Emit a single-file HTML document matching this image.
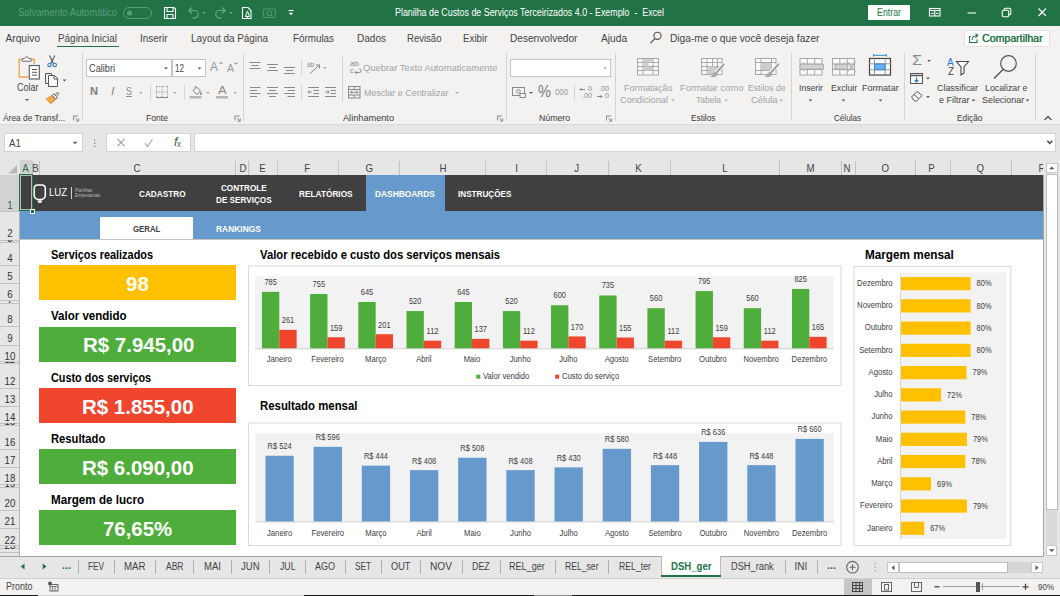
<!DOCTYPE html>
<html lang="pt-BR"><head><meta charset="utf-8"><title>Planilha de Custos de Serviços Terceirizados 4.0 - Exemplo - Excel</title>
<style>
html,body{margin:0;padding:0;}
body{width:1060px;height:596px;position:relative;overflow:hidden;background:#e6e6e6;font-family:"Liberation Sans",sans-serif;}
.t{position:absolute;white-space:nowrap;display:block;}
.r{position:absolute;}
.ov{position:absolute;left:0;top:0;pointer-events:none;}
</style></head><body>
<div class="r" style="left:0px;top:0px;width:1060px;height:26px;background:#217346;"></div>
<div class="r" style="left:0px;top:26px;width:1060px;height:98px;background:#f3f2f1;"></div>
<div class="r" style="left:0px;top:124px;width:1060px;height:1px;background:#dadada;"></div>
<div class="r" style="left:0px;top:125px;width:1060px;height:50px;background:#e6e6e6;"></div>
<span class="t" style="left:18.00px;top:7.40px;font-size:10px;line-height:12.0px;color:#5f9c7c;transform:scaleX(0.9423);transform-origin:left center;">Salvamento Automático</span>
<span class="t" style="left:395.00px;top:6.80px;font-size:10px;line-height:12.0px;color:#fff;transform:scaleX(0.8869);transform-origin:left center;white-space:pre;">Planilha de Custos de Serviços Terceirizados 4.0 - Exemplo  -  Excel</span>
<div class="r" style="left:868px;top:5px;width:41.5px;height:15px;background:#fff;border-radius:1px;"></div>
<span class="t" style="left:877.00px;top:6.50px;font-size:10px;line-height:12.0px;color:#217346;transform:scaleX(0.8813);transform-origin:left center;">Entrar</span>
<span class="t" style="left:5.50px;top:32.98px;font-size:10.2px;line-height:12.24px;color:#444;">Arquivo</span>
<span class="t" style="left:58.00px;top:32.98px;font-size:10.2px;line-height:12.24px;color:#444;transform:scaleX(0.9724);transform-origin:left center;">Página Inicial</span>
<span class="t" style="left:139.50px;top:32.98px;font-size:10.2px;line-height:12.24px;color:#444;transform:scaleX(0.9704);transform-origin:left center;">Inserir</span>
<span class="t" style="left:191.00px;top:32.98px;font-size:10.2px;line-height:12.24px;color:#444;transform:scaleX(0.9698);transform-origin:left center;">Layout da Página</span>
<span class="t" style="left:292.50px;top:32.98px;font-size:10.2px;line-height:12.24px;color:#444;transform:scaleX(0.9645);transform-origin:left center;">Fórmulas</span>
<span class="t" style="left:356.50px;top:32.98px;font-size:10.2px;line-height:12.24px;color:#444;transform:scaleX(0.9835);transform-origin:left center;">Dados</span>
<span class="t" style="left:406.50px;top:32.98px;font-size:10.2px;line-height:12.24px;color:#444;transform:scaleX(0.9362);transform-origin:left center;">Revisão</span>
<span class="t" style="left:463.00px;top:32.98px;font-size:10.2px;line-height:12.24px;color:#444;transform:scaleX(0.9606);transform-origin:left center;">Exibir</span>
<span class="t" style="left:510.00px;top:32.98px;font-size:10.2px;line-height:12.24px;color:#444;transform:scaleX(0.9921);transform-origin:left center;">Desenvolvedor</span>
<span class="t" style="left:601.00px;top:32.98px;font-size:10.2px;line-height:12.24px;color:#444;">Ajuda</span>
<span class="t" style="left:670.00px;top:32.98px;font-size:10.2px;line-height:12.24px;color:#444;">Diga-me o que você deseja fazer</span>
<div class="r" style="left:57px;top:45.5px;width:61.5px;height:1.8px;background:#217346;"></div>
<div class="r" style="left:964px;top:29.5px;width:86px;height:17px;background:#fff;box-sizing:border-box;border:1px solid #e0e0e0;border-radius:2px;"></div>
<span class="t" style="left:982.00px;top:32.78px;font-size:10.2px;line-height:12.24px;color:#217346;transform:scaleX(1.0362);transform-origin:left center;text-shadow:0.3px 0 0 #217346;">Compartilhar</span>
<div class="r" style="left:82px;top:53px;width:1px;height:68px;background:#d4d4d4;"></div>
<div class="r" style="left:242.8px;top:53px;width:1px;height:68px;background:#d4d4d4;"></div>
<div class="r" style="left:505.5px;top:53px;width:1px;height:68px;background:#d4d4d4;"></div>
<div class="r" style="left:615px;top:53px;width:1px;height:68px;background:#d4d4d4;"></div>
<div class="r" style="left:791px;top:53px;width:1px;height:68px;background:#d4d4d4;"></div>
<div class="r" style="left:904px;top:53px;width:1px;height:68px;background:#d4d4d4;"></div>
<div class="r" style="left:1035px;top:53px;width:1px;height:68px;background:#d4d4d4;"></div>
<div class="r" style="left:150px;top:85px;width:1px;height:15px;background:#d4d4d4;"></div>
<div class="r" style="left:183.5px;top:85px;width:1px;height:15px;background:#d4d4d4;"></div>
<div class="r" style="left:301px;top:60px;width:1px;height:15px;background:#d4d4d4;"></div>
<div class="r" style="left:301px;top:85px;width:1px;height:15px;background:#d4d4d4;"></div>
<div class="r" style="left:341.8px;top:57px;width:1px;height:45px;background:#d4d4d4;"></div>
<div class="r" style="left:573.5px;top:85px;width:1px;height:15px;background:#d4d4d4;"></div>
<span class="t" style="left:3.00px;top:112.32px;font-size:9.8px;line-height:11.76px;color:#3a3a3a;transform:scaleX(0.8558);transform-origin:left center;">Área de Transf...</span>
<span class="t" style="left:146.00px;top:112.32px;font-size:9.8px;line-height:11.76px;color:#3a3a3a;transform:scaleX(0.8779);transform-origin:left center;">Fonte</span>
<span class="t" style="left:343.00px;top:112.32px;font-size:9.8px;line-height:11.76px;color:#3a3a3a;transform:scaleX(0.9361);transform-origin:left center;">Alinhamento</span>
<span class="t" style="left:539.00px;top:112.32px;font-size:9.8px;line-height:11.76px;color:#3a3a3a;transform:scaleX(0.8894);transform-origin:left center;">Número</span>
<span class="t" style="left:690.50px;top:112.32px;font-size:9.8px;line-height:11.76px;color:#3a3a3a;transform:scaleX(0.8488);transform-origin:left center;">Estilos</span>
<span class="t" style="left:834.00px;top:112.32px;font-size:9.8px;line-height:11.76px;color:#3a3a3a;transform:scaleX(0.8261);transform-origin:left center;">Células</span>
<span class="t" style="left:957.30px;top:112.32px;font-size:9.8px;line-height:11.76px;color:#3a3a3a;transform:scaleX(0.8510);transform-origin:left center;">Edição</span>
<span class="t" style="left:16.50px;top:81.90px;font-size:10px;line-height:12.0px;color:#444;transform:scaleX(0.8997);transform-origin:left center;">Colar</span>
<div class="r" style="left:86px;top:59px;width:86px;height:17.5px;background:#fff;box-sizing:border-box;border:1px solid #c6c6c6;"></div>
<div class="r" style="left:171.5px;top:59px;width:34px;height:17.5px;background:#fff;box-sizing:border-box;border:1px solid #c6c6c6;"></div>
<span class="t" style="left:89.00px;top:62.70px;font-size:10px;line-height:12.0px;color:#444;transform:scaleX(0.9174);transform-origin:left center;">Calibri</span>
<span class="t" style="left:175.00px;top:62.70px;font-size:10px;line-height:12.0px;color:#444;transform:scaleX(0.8091);transform-origin:left center;">12</span>
<span class="t" style="left:210.00px;top:60.30px;font-size:12px;line-height:14.4px;color:#999;">A</span>
<span class="t" style="left:227.00px;top:61.70px;font-size:10.5px;line-height:12.6px;color:#999;">A</span>
<span class="t" style="left:90.00px;top:85.10px;font-size:11.5px;line-height:13.8px;color:#7c7c7c;font-weight:700;transform:scaleX(0.9633);transform-origin:left center;">N</span>
<span class="t" style="left:110.50px;top:85.10px;font-size:11.5px;line-height:13.8px;color:#8a8a8a;font-style:italic;transform:scaleX(1.0954);transform-origin:left center;font-family:"Liberation Serif",serif;">I</span>
<span class="t" style="left:126.00px;top:85.10px;font-size:11.5px;line-height:13.8px;color:#8a8a8a;transform:scaleX(0.7822);transform-origin:left center;text-decoration:underline;">S</span>
<span class="t" style="left:217.80px;top:84.20px;font-size:11px;line-height:13.2px;color:#8a8a8a;transform:scaleX(1.1858);transform-origin:left center;">A</span>
<span class="t" style="left:363.00px;top:62.24px;font-size:9.6px;line-height:11.52px;color:#a3a3a3;transform:scaleX(0.9782);transform-origin:left center;">Quebrar Texto Automaticamente</span>
<span class="t" style="left:363.50px;top:87.24px;font-size:9.6px;line-height:11.52px;color:#a3a3a3;transform:scaleX(0.9317);transform-origin:left center;">Mesclar e Centralizar</span>
<div class="r" style="left:510px;top:59px;width:101px;height:17.5px;background:#fff;box-sizing:border-box;border:1px solid #c6c6c6;"></div>
<span class="t" style="left:538.00px;top:82.30px;font-size:17px;line-height:20.4px;color:#777;transform:scaleX(0.8600);transform-origin:left center;">%</span>
<span class="t" style="left:555.00px;top:86.60px;font-size:9px;line-height:10.8px;color:#999;transform:scaleX(0.8657);transform-origin:left center;">000</span>
<span class="t" style="left:624.00px;top:82.14px;font-size:9.6px;line-height:11.52px;color:#a3a3a3;transform:scaleX(0.9469);transform-origin:left center;">Formatação</span>
<span class="t" style="left:620.00px;top:94.24px;font-size:9.6px;line-height:11.52px;color:#a3a3a3;transform:scaleX(0.9568);transform-origin:left center;">Condicional</span>
<span class="t" style="left:679.50px;top:82.14px;font-size:9.6px;line-height:11.52px;color:#a3a3a3;transform:scaleX(0.9757);transform-origin:left center;">Formatar como</span>
<span class="t" style="left:696.00px;top:94.24px;font-size:9.6px;line-height:11.52px;color:#a3a3a3;transform:scaleX(0.8837);transform-origin:left center;">Tabela</span>
<span class="t" style="left:747.50px;top:82.14px;font-size:9.6px;line-height:11.52px;color:#a3a3a3;transform:scaleX(0.9010);transform-origin:left center;">Estilos de</span>
<span class="t" style="left:751.00px;top:94.24px;font-size:9.6px;line-height:11.52px;color:#a3a3a3;transform:scaleX(0.9737);transform-origin:left center;">Célula</span>
<span class="t" style="left:798.80px;top:82.24px;font-size:9.6px;line-height:11.52px;color:#444;transform:scaleX(0.8998);transform-origin:left center;">Inserir</span>
<span class="t" style="left:830.80px;top:82.24px;font-size:9.6px;line-height:11.52px;color:#444;transform:scaleX(0.9096);transform-origin:left center;">Excluir</span>
<span class="t" style="left:862.00px;top:82.24px;font-size:9.6px;line-height:11.52px;color:#444;transform:scaleX(0.9425);transform-origin:left center;">Formatar</span>
<span class="t" style="left:937.00px;top:82.24px;font-size:9.6px;line-height:11.52px;color:#444;transform:scaleX(0.9260);transform-origin:left center;">Classificar</span>
<span class="t" style="left:939.00px;top:94.24px;font-size:9.6px;line-height:11.52px;color:#444;transform:scaleX(0.9374);transform-origin:left center;">e Filtrar</span>
<span class="t" style="left:985.00px;top:82.24px;font-size:9.6px;line-height:11.52px;color:#444;transform:scaleX(0.9154);transform-origin:left center;">Localizar e</span>
<span class="t" style="left:981.60px;top:94.24px;font-size:9.6px;line-height:11.52px;color:#444;transform:scaleX(0.9303);transform-origin:left center;">Selecionar</span>
<span class="t" style="left:911.50px;top:52.10px;font-size:14px;line-height:16.8px;color:#8a8a8a;transform:scaleX(1.1555);transform-origin:left center;">Σ</span>
<div class="r" style="left:4px;top:132.8px;width:78.5px;height:19.6px;background:#fff;box-sizing:border-box;border:1px solid #d4d4d4;"></div>
<div class="r" style="left:106px;top:132.8px;width:85px;height:19.6px;background:#fff;box-sizing:border-box;border:1px solid #d4d4d4;"></div>
<div class="r" style="left:194px;top:132.8px;width:861.6px;height:19.6px;background:#fff;box-sizing:border-box;border:1px solid #d4d4d4;"></div>
<span class="t" style="left:9.00px;top:136.70px;font-size:10.5px;line-height:12.6px;color:#444;transform:scaleX(0.9343);transform-origin:left center;">A1</span>
<span class="t" style="left:173.50px;top:135.00px;font-size:12.5px;line-height:15.0px;color:#555;font-style:italic;transform:scaleX(1.0077);transform-origin:left center;font-family:"Liberation Serif",serif;">f</span>
<span class="t" style="left:177.00px;top:139.40px;font-size:8.5px;line-height:10.2px;color:#555;font-style:italic;transform:scaleX(0.9412);transform-origin:left center;font-family:"Liberation Serif",serif;">x</span>
<span class="t" style="left:947.30px;top:56.00px;font-size:10.5px;line-height:12.6px;color:#2b7cd3;transform:scaleX(0.9567);transform-origin:left center;">A</span>
<span class="t" style="left:947.50px;top:65.00px;font-size:10.5px;line-height:12.6px;color:#444;transform:scaleX(0.9355);transform-origin:left center;">Z</span>
<span class="t" style="left:349.50px;top:59.00px;font-size:8px;line-height:9.6px;color:#8a8a8a;transform:scaleX(1.0114);transform-origin:left center;">ab</span>
<span class="t" style="left:349.80px;top:66.20px;font-size:8px;line-height:9.6px;color:#8a8a8a;transform:scaleX(0.8750);transform-origin:left center;">c</span>
<span class="t" style="left:307.00px;top:61.10px;font-size:6.5px;line-height:7.8px;color:#8a8a8a;transform:scaleX(0.9682);transform-origin:left center;">ab</span>
<span class="t" style="left:587.50px;top:85.10px;font-size:7px;line-height:8.4px;color:#8a8a8a;transform:scaleX(1.0274);transform-origin:left center;">0</span>
<span class="t" style="left:582.00px;top:92.10px;font-size:7px;line-height:8.4px;color:#8a8a8a;transform:scaleX(1.0276);transform-origin:left center;">.00</span>
<span class="t" style="left:598.50px;top:85.10px;font-size:7px;line-height:8.4px;color:#8a8a8a;transform:scaleX(1.0276);transform-origin:left center;">.00</span>
<span class="t" style="left:604.50px;top:92.10px;font-size:7px;line-height:8.4px;color:#8a8a8a;transform:scaleX(1.0274);transform-origin:left center;">0</span>
<div class="r" style="left:19.5px;top:174.5px;width:1023.5px;height:381px;background:#fff;"></div>
<div class="r" style="left:19.5px;top:160px;width:12.5px;height:14.5px;background:#d2d2d2;"></div>
<div class="r" style="left:19.5px;top:173.5px;width:12.5px;height:1.5px;background:#217346;"></div>
<div class="r" style="left:31.5px;top:161px;width:1px;height:13.5px;background:#c2c2c2;"></div>
<div class="r" style="left:38.8px;top:161px;width:1px;height:13.5px;background:#c2c2c2;"></div>
<div class="r" style="left:235.25px;top:161px;width:1px;height:13.5px;background:#c2c2c2;"></div>
<div class="r" style="left:248.25px;top:161px;width:1px;height:13.5px;background:#c2c2c2;"></div>
<div class="r" style="left:277.0px;top:161px;width:1px;height:13.5px;background:#c2c2c2;"></div>
<div class="r" style="left:338.25px;top:161px;width:1px;height:13.5px;background:#c2c2c2;"></div>
<div class="r" style="left:399.0px;top:161px;width:1px;height:13.5px;background:#c2c2c2;"></div>
<div class="r" style="left:484.5px;top:161px;width:1px;height:13.5px;background:#c2c2c2;"></div>
<div class="r" style="left:545.5px;top:161px;width:1px;height:13.5px;background:#c2c2c2;"></div>
<div class="r" style="left:608.0px;top:161px;width:1px;height:13.5px;background:#c2c2c2;"></div>
<div class="r" style="left:669.5px;top:161px;width:1px;height:13.5px;background:#c2c2c2;"></div>
<div class="r" style="left:778.5px;top:161px;width:1px;height:13.5px;background:#c2c2c2;"></div>
<div class="r" style="left:840.5px;top:161px;width:1px;height:13.5px;background:#c2c2c2;"></div>
<div class="r" style="left:854.5px;top:161px;width:1px;height:13.5px;background:#c2c2c2;"></div>
<div class="r" style="left:914.5px;top:161px;width:1px;height:13.5px;background:#c2c2c2;"></div>
<div class="r" style="left:949.5px;top:161px;width:1px;height:13.5px;background:#c2c2c2;"></div>
<div class="r" style="left:1010.5px;top:161px;width:1px;height:13.5px;background:#c2c2c2;"></div>
<span class="t" style="left:22.40px;top:161.52px;font-size:10.8px;line-height:12.96px;color:#217346;transform:scaleX(0.9000);transform-origin:center center;">A</span>
<span class="t" style="left:32.00px;top:161.52px;font-size:10.8px;line-height:12.96px;color:#444;transform:scaleX(0.9000);transform-origin:center center;">B</span>
<span class="t" style="left:133.10px;top:161.52px;font-size:10.8px;line-height:12.96px;color:#444;transform:scaleX(0.9000);transform-origin:center center;">C</span>
<span class="t" style="left:238.60px;top:161.52px;font-size:10.8px;line-height:12.96px;color:#444;transform:scaleX(0.9000);transform-origin:center center;">D</span>
<span class="t" style="left:259.40px;top:161.52px;font-size:10.8px;line-height:12.96px;color:#444;transform:scaleX(0.9000);transform-origin:center center;">E</span>
<span class="t" style="left:304.20px;top:161.52px;font-size:10.8px;line-height:12.96px;color:#444;transform:scaleX(0.9000);transform-origin:center center;">F</span>
<span class="t" style="left:365.30px;top:161.52px;font-size:10.8px;line-height:12.96px;color:#444;transform:scaleX(0.9000);transform-origin:center center;">G</span>
<span class="t" style="left:438.60px;top:161.52px;font-size:10.8px;line-height:12.96px;color:#444;transform:scaleX(0.9000);transform-origin:center center;">H</span>
<span class="t" style="left:514.50px;top:161.52px;font-size:10.8px;line-height:12.96px;color:#444;transform:scaleX(0.9000);transform-origin:center center;">I</span>
<span class="t" style="left:574.30px;top:161.52px;font-size:10.8px;line-height:12.96px;color:#444;transform:scaleX(0.9000);transform-origin:center center;">J</span>
<span class="t" style="left:635.40px;top:161.52px;font-size:10.8px;line-height:12.96px;color:#444;transform:scaleX(0.9000);transform-origin:center center;">K</span>
<span class="t" style="left:722.00px;top:161.52px;font-size:10.8px;line-height:12.96px;color:#444;transform:scaleX(0.9000);transform-origin:center center;">L</span>
<span class="t" style="left:805.50px;top:161.52px;font-size:10.8px;line-height:12.96px;color:#444;transform:scaleX(0.9000);transform-origin:center center;">M</span>
<span class="t" style="left:843.10px;top:161.52px;font-size:10.8px;line-height:12.96px;color:#444;transform:scaleX(0.9000);transform-origin:center center;">N</span>
<span class="t" style="left:880.80px;top:161.52px;font-size:10.8px;line-height:12.96px;color:#444;transform:scaleX(0.9000);transform-origin:center center;">O</span>
<span class="t" style="left:928.40px;top:161.52px;font-size:10.8px;line-height:12.96px;color:#444;transform:scaleX(0.9000);transform-origin:center center;">P</span>
<span class="t" style="left:975.80px;top:161.52px;font-size:10.8px;line-height:12.96px;color:#444;transform:scaleX(0.9000);transform-origin:center center;">Q</span>
<span class="t" style="left:1037.90px;top:161.52px;font-size:10.8px;line-height:12.96px;color:#444;transform:scaleX(0.9000);transform-origin:center center;">R</span>
<svg class="ov" width="20" height="16" style="left:0;top:160px" viewBox="0 0 20 16"><path d="M17 5v8.500h-8.500z" fill="#b7b7b7"/></svg>
<div class="r" style="left:0px;top:175px;width:19.5px;height:381px;background:#e6e6e6;"></div>
<div class="r" style="left:0px;top:175px;width:19.5px;height:36px;background:#d2d2d2;"></div>
<div class="r" style="left:18.5px;top:175px;width:1.5px;height:36px;background:#217346;"></div>
<span class="t" style="left:7.00px;top:198.72px;font-size:10.8px;line-height:12.96px;color:#217346;transform:scaleX(0.9000);transform-origin:center center;">1</span>
<span class="t" style="left:7.00px;top:226.72px;font-size:10.8px;line-height:12.96px;color:#333;transform:scaleX(0.9000);transform-origin:center center;">2</span>
<span class="t" style="left:7.00px;top:251.92px;font-size:10.8px;line-height:12.96px;color:#333;transform:scaleX(0.9000);transform-origin:center center;">4</span>
<span class="t" style="left:7.00px;top:270.22px;font-size:10.8px;line-height:12.96px;color:#333;transform:scaleX(0.9000);transform-origin:center center;">5</span>
<span class="t" style="left:7.00px;top:287.92px;font-size:10.8px;line-height:12.96px;color:#333;transform:scaleX(0.9000);transform-origin:center center;">6</span>
<span class="t" style="left:7.00px;top:312.92px;font-size:10.8px;line-height:12.96px;color:#333;transform:scaleX(0.9000);transform-origin:center center;">8</span>
<span class="t" style="left:7.00px;top:331.72px;font-size:10.8px;line-height:12.96px;color:#333;transform:scaleX(0.9000);transform-origin:center center;">9</span>
<span class="t" style="left:3.99px;top:349.72px;font-size:10.8px;line-height:12.96px;color:#333;transform:scaleX(0.9000);transform-origin:center center;">10</span>
<span class="t" style="left:3.99px;top:374.62px;font-size:10.8px;line-height:12.96px;color:#333;transform:scaleX(0.9000);transform-origin:center center;">12</span>
<span class="t" style="left:3.99px;top:392.92px;font-size:10.8px;line-height:12.96px;color:#333;transform:scaleX(0.9000);transform-origin:center center;">13</span>
<span class="t" style="left:3.99px;top:410.72px;font-size:10.8px;line-height:12.96px;color:#333;transform:scaleX(0.9000);transform-origin:center center;">14</span>
<span class="t" style="left:3.99px;top:435.72px;font-size:10.8px;line-height:12.96px;color:#333;transform:scaleX(0.9000);transform-origin:center center;">16</span>
<span class="t" style="left:3.99px;top:454.22px;font-size:10.8px;line-height:12.96px;color:#333;transform:scaleX(0.9000);transform-origin:center center;">17</span>
<span class="t" style="left:3.99px;top:472.22px;font-size:10.8px;line-height:12.96px;color:#333;transform:scaleX(0.9000);transform-origin:center center;">18</span>
<span class="t" style="left:3.99px;top:497.22px;font-size:10.8px;line-height:12.96px;color:#333;transform:scaleX(0.9000);transform-origin:center center;">20</span>
<span class="t" style="left:3.99px;top:515.42px;font-size:10.8px;line-height:12.96px;color:#333;transform:scaleX(0.9000);transform-origin:center center;">21</span>
<span class="t" style="left:3.99px;top:533.72px;font-size:10.8px;line-height:12.96px;color:#333;transform:scaleX(0.9000);transform-origin:center center;">22</span>
<div class="r" style="left:0px;top:210.5px;width:19px;height:1px;background:#c2c2c2;"></div>
<div class="r" style="left:0px;top:239.5px;width:19px;height:1px;background:#c2c2c2;"></div>
<div class="r" style="left:0px;top:241.5px;width:19px;height:1px;background:#c2c2c2;"></div>
<div class="r" style="left:0px;top:265.0px;width:19px;height:1px;background:#c2c2c2;"></div>
<div class="r" style="left:0px;top:283.0px;width:19px;height:1px;background:#c2c2c2;"></div>
<div class="r" style="left:0px;top:300.2px;width:19px;height:1px;background:#c2c2c2;"></div>
<div class="r" style="left:0px;top:302.5px;width:19px;height:1px;background:#c2c2c2;"></div>
<div class="r" style="left:0px;top:325.9px;width:19px;height:1px;background:#c2c2c2;"></div>
<div class="r" style="left:0px;top:344.5px;width:19px;height:1px;background:#c2c2c2;"></div>
<div class="r" style="left:0px;top:361.1px;width:19px;height:1px;background:#c2c2c2;"></div>
<div class="r" style="left:0px;top:363.3px;width:19px;height:1px;background:#c2c2c2;"></div>
<div class="r" style="left:0px;top:387.5px;width:19px;height:1px;background:#c2c2c2;"></div>
<div class="r" style="left:0px;top:405.5px;width:19px;height:1px;background:#c2c2c2;"></div>
<div class="r" style="left:0px;top:422.5px;width:19px;height:1px;background:#c2c2c2;"></div>
<div class="r" style="left:0px;top:425.0px;width:19px;height:1px;background:#c2c2c2;"></div>
<div class="r" style="left:0px;top:448.9px;width:19px;height:1px;background:#c2c2c2;"></div>
<div class="r" style="left:0px;top:467.0px;width:19px;height:1px;background:#c2c2c2;"></div>
<div class="r" style="left:0px;top:483.5px;width:19px;height:1px;background:#c2c2c2;"></div>
<div class="r" style="left:0px;top:486.5px;width:19px;height:1px;background:#c2c2c2;"></div>
<div class="r" style="left:0px;top:510.1px;width:19px;height:1px;background:#c2c2c2;"></div>
<div class="r" style="left:0px;top:528.0px;width:19px;height:1px;background:#c2c2c2;"></div>
<div class="r" style="left:0px;top:545.0px;width:19px;height:1px;background:#c2c2c2;"></div>
<div class="r" style="left:0px;top:547.5px;width:19px;height:1px;background:#c2c2c2;"></div>
<div class="r" style="left:0;top:240px;width:19px;height:2px;overflow:hidden"><span class="t" style="left:7.00px;top:-8.38px;font-size:10.8px;line-height:12.96px;color:#333;transform:scaleX(0.9000);transform-origin:center center;">3</span></div>
<div class="r" style="left:0;top:300.7px;width:19px;height:2.3000000000000114px;overflow:hidden"><span class="t" style="left:7.00px;top:-8.08px;font-size:10.8px;line-height:12.96px;color:#333;transform:scaleX(0.9000);transform-origin:center center;">7</span></div>
<div class="r" style="left:0;top:361.6px;width:19px;height:2.1999999999999886px;overflow:hidden"><span class="t" style="left:4.39px;top:-8.18px;font-size:10.8px;line-height:12.96px;color:#333;transform:scaleX(0.9000);transform-origin:center center;">11</span></div>
<div class="r" style="left:0;top:423px;width:19px;height:2.5px;overflow:hidden"><span class="t" style="left:3.99px;top:-7.88px;font-size:10.8px;line-height:12.96px;color:#333;transform:scaleX(0.9000);transform-origin:center center;">15</span></div>
<div class="r" style="left:0;top:484px;width:19px;height:3px;overflow:hidden"><span class="t" style="left:3.99px;top:-7.38px;font-size:10.8px;line-height:12.96px;color:#333;transform:scaleX(0.9000);transform-origin:center center;">19</span></div>
<div class="r" style="left:0;top:545.5px;width:19px;height:3.5px;overflow:hidden"><span class="t" style="left:3.99px;top:-6.88px;font-size:10.8px;line-height:12.96px;color:#333;transform:scaleX(0.9000);transform-origin:center center;">23</span></div>
<div class="r" style="left:0px;top:552.4px;width:19px;height:1px;background:#c2c2c2;"></div>
<div class="r" style="left:19px;top:175px;width:1px;height:381px;background:#b5b5b5;"></div>
<div class="r" style="left:19.5px;top:174.7px;width:1023.8px;height:36.3px;background:#404040;"></div>
<div class="r" style="left:19.5px;top:210.75px;width:1023.8px;height:28.35px;background:#6699cc;"></div>
<div class="r" style="left:19.5px;top:239.1px;width:1023.8px;height:0.8px;background:#c4c4c4;"></div>
<div class="r" style="left:365.75px;top:174.5px;width:78.75px;height:37px;background:#6699cc;"></div>
<div class="r" style="left:100px;top:217.3px;width:92.6px;height:21.8px;background:#fff;"></div>
<span class="t" style="left:138.60px;top:187.96px;font-size:9.4px;line-height:11.28px;color:#fff;font-weight:700;transform:scaleX(0.8767);transform-origin:left center;">CADASTRO</span>
<span class="t" style="left:221.25px;top:181.86px;font-size:9.4px;line-height:11.28px;color:#fff;font-weight:700;transform:scaleX(0.8674);transform-origin:left center;">CONTROLE</span>
<span class="t" style="left:216.25px;top:194.36px;font-size:9.4px;line-height:11.28px;color:#fff;font-weight:700;transform:scaleX(0.8700);transform-origin:left center;">DE SERVIÇOS</span>
<span class="t" style="left:299.25px;top:187.96px;font-size:9.4px;line-height:11.28px;color:#fff;font-weight:700;transform:scaleX(0.8822);transform-origin:left center;">RELATÓRIOS</span>
<span class="t" style="left:375.00px;top:187.96px;font-size:9.4px;line-height:11.28px;color:#fff;font-weight:700;transform:scaleX(0.8906);transform-origin:left center;">DASHBOARDS</span>
<span class="t" style="left:457.50px;top:187.96px;font-size:9.4px;line-height:11.28px;color:#fff;font-weight:700;transform:scaleX(0.8681);transform-origin:left center;">INSTRUÇÕES</span>
<span class="t" style="left:132.70px;top:223.36px;font-size:9.4px;line-height:11.28px;color:#404040;font-weight:700;transform:scaleX(0.8328);transform-origin:left center;">GERAL</span>
<span class="t" style="left:216.25px;top:222.86px;font-size:9.4px;line-height:11.28px;color:#fff;font-weight:700;transform:scaleX(0.8976);transform-origin:left center;">RANKINGS</span>
<svg class="ov" width="20" height="24" style="left:30px;top:182px" viewBox="0 0 20 24"><path d="M7.500 2.900h4.500a3.300 3.300 0 0 1 3.300 3.300v7a4.200 4.200 0 0 1-4.200 4.200h-2.700a4.200 4.200 0 0 1-4.200-4.200v-7a3.300 3.300 0 0 1 3.300-3.300z" fill="none" stroke="#fff" stroke-width="1.500"/><path d="M7.300 18.200h5l-1 2.800h-3z" fill="#e8e8e8"/></svg>
<span class="t" style="left:49.30px;top:186.18px;font-size:11.2px;line-height:13.44px;color:#fff;transform:scaleX(0.8601);transform-origin:left center;">LUZ</span>
<div class="r" style="left:71px;top:187px;width:0.8px;height:11.5px;background:#cfcfcf;"></div>
<span class="t" style="left:74.80px;top:187.84px;font-size:4.6px;line-height:5.52px;color:#b8b8b8;transform:scaleX(0.9321);transform-origin:left center;">Planilhas</span>
<span class="t" style="left:74.80px;top:192.74px;font-size:4.6px;line-height:5.52px;color:#b8b8b8;transform:scaleX(0.9388);transform-origin:left center;">Empresariais</span>
<div class="r" style="left:19px;top:174.3px;width:13.6px;height:37.2px;background:transparent;box-sizing:border-box;border:1.600px solid #217346;box-shadow:inset 0 0 0 0.800px rgba(255,255,255,.8);"></div>
<div class="r" style="left:29.8px;top:209.3px;width:3.2px;height:3.2px;background:#217346;border:0.600px solid #fff;"></div>
<span class="t" style="left:51.00px;top:247.86px;font-size:11.9px;line-height:14.28px;color:#000;font-weight:700;transform:scaleX(0.9196);transform-origin:left center;">Serviços realizados</span>
<div class="r" style="left:39.1px;top:265px;width:196.5px;height:35.2px;background:#ffc000;"></div>
<span class="t" style="left:126.00px;top:271.64px;font-size:20.6px;line-height:24.72px;color:#fff;font-weight:700;transform:scaleX(0.9950);transform-origin:left center;">98</span>
<span class="t" style="left:50.80px;top:309.16px;font-size:11.9px;line-height:14.28px;color:#000;font-weight:700;transform:scaleX(0.9701);transform-origin:left center;">Valor vendido</span>
<div class="r" style="left:39.1px;top:326.5px;width:196.5px;height:35px;background:#4ead3b;"></div>
<span class="t" style="left:82.50px;top:333.04px;font-size:20.6px;line-height:24.72px;color:#fff;font-weight:700;transform:scaleX(0.9933);transform-origin:left center;">R$ 7.945,00</span>
<span class="t" style="left:51.00px;top:370.66px;font-size:11.9px;line-height:14.28px;color:#000;font-weight:700;transform:scaleX(0.9127);transform-origin:left center;">Custo dos serviços</span>
<div class="r" style="left:39.1px;top:388.4px;width:196.5px;height:34.6px;background:#f0462e;"></div>
<span class="t" style="left:81.90px;top:394.74px;font-size:20.6px;line-height:24.72px;color:#fff;font-weight:700;transform:scaleX(0.9942);transform-origin:left center;">R$ 1.855,00</span>
<span class="t" style="left:51.10px;top:431.86px;font-size:11.9px;line-height:14.28px;color:#000;font-weight:700;transform:scaleX(0.9439);transform-origin:left center;">Resultado</span>
<div class="r" style="left:39.1px;top:449.1px;width:196.5px;height:34.9px;background:#4ead3b;"></div>
<span class="t" style="left:81.90px;top:455.59px;font-size:20.6px;line-height:24.72px;color:#fff;font-weight:700;transform:scaleX(0.9942);transform-origin:left center;">R$ 6.090,00</span>
<span class="t" style="left:51.10px;top:493.46px;font-size:11.9px;line-height:14.28px;color:#000;font-weight:700;transform:scaleX(0.9798);transform-origin:left center;">Margem de lucro</span>
<div class="r" style="left:39.1px;top:510.1px;width:196.5px;height:35.4px;background:#4ead3b;"></div>
<span class="t" style="left:102.60px;top:516.84px;font-size:20.6px;line-height:24.72px;color:#fff;font-weight:700;transform:scaleX(0.9890);transform-origin:left center;">76,65%</span>
<span class="t" style="left:260.00px;top:247.66px;font-size:11.9px;line-height:14.28px;color:#000;font-weight:700;transform:scaleX(0.9461);transform-origin:left center;">Valor recebido e custo dos serviços mensais</span>
<span class="t" style="left:260.00px;top:398.86px;font-size:11.9px;line-height:14.28px;color:#000;font-weight:700;transform:scaleX(0.9573);transform-origin:left center;">Resultado mensal</span>
<span class="t" style="left:865.40px;top:248.06px;font-size:11.9px;line-height:14.28px;color:#000;font-weight:700;transform:scaleX(0.9872);transform-origin:left center;">Margem mensal</span>
<div class="r" style="left:1043px;top:160px;width:17px;height:396.5px;background:#e6e6e6;"></div>
<div class="r" style="left:1043px;top:175px;width:1px;height:381.5px;background:#a6a6a6;"></div>
<div class="r" style="left:1046px;top:174px;width:11.4px;height:371px;background:#dadada;"></div>
<div class="r" style="left:1046.2px;top:162.7px;width:11.4px;height:10.7px;background:#fff;box-sizing:border-box;border:1px solid #c8c8c8;"></div>
<div class="r" style="left:1046.2px;top:174.3px;width:11.4px;height:336.1px;background:#fff;box-sizing:border-box;border:1px solid #bdbdbd;"></div>
<div class="r" style="left:1046px;top:545.1px;width:11.4px;height:11px;background:#fff;box-sizing:border-box;border:1px solid #c8c8c8;"></div>
<div class="r" style="left:0px;top:556.25px;width:1060px;height:22px;background:#e6e6e6;"></div>
<div class="r" style="left:0px;top:555.6px;width:1044px;height:1px;background:#a6a6a6;"></div>
<div class="r" style="left:0px;top:578.25px;width:1060px;height:17.75px;background:#f3f2f1;"></div>
<div class="r" style="left:0px;top:577.75px;width:1060px;height:1px;background:#d0d0d0;"></div>
<div class="r" style="left:77.5px;top:560px;width:1px;height:14px;background:#b0b0b0;"></div>
<div class="r" style="left:114.0px;top:560px;width:1px;height:14px;background:#b0b0b0;"></div>
<div class="r" style="left:155.0px;top:560px;width:1px;height:14px;background:#b0b0b0;"></div>
<div class="r" style="left:193.0px;top:560px;width:1px;height:14px;background:#b0b0b0;"></div>
<div class="r" style="left:231.0px;top:560px;width:1px;height:14px;background:#b0b0b0;"></div>
<div class="r" style="left:269.0px;top:560px;width:1px;height:14px;background:#b0b0b0;"></div>
<div class="r" style="left:305.0px;top:560px;width:1px;height:14px;background:#b0b0b0;"></div>
<div class="r" style="left:345.25px;top:560px;width:1px;height:14px;background:#b0b0b0;"></div>
<div class="r" style="left:381.0px;top:560px;width:1px;height:14px;background:#b0b0b0;"></div>
<div class="r" style="left:420.25px;top:560px;width:1px;height:14px;background:#b0b0b0;"></div>
<div class="r" style="left:461.5px;top:560px;width:1px;height:14px;background:#b0b0b0;"></div>
<div class="r" style="left:500.0px;top:560px;width:1px;height:14px;background:#b0b0b0;"></div>
<div class="r" style="left:555.0px;top:560px;width:1px;height:14px;background:#b0b0b0;"></div>
<div class="r" style="left:608.25px;top:560px;width:1px;height:14px;background:#b0b0b0;"></div>
<div class="r" style="left:784.5px;top:560px;width:1px;height:14px;background:#b0b0b0;"></div>
<div class="r" style="left:817.3px;top:560px;width:1px;height:14px;background:#b0b0b0;"></div>
<span class="t" style="left:87.50px;top:561.20px;font-size:10px;line-height:12.0px;color:#444;transform:scaleX(0.8227);transform-origin:left center;">FEV</span>
<span class="t" style="left:123.50px;top:561.20px;font-size:10px;line-height:12.0px;color:#444;transform:scaleX(0.9675);transform-origin:left center;">MAR</span>
<span class="t" style="left:165.50px;top:561.20px;font-size:10px;line-height:12.0px;color:#444;transform:scaleX(0.8511);transform-origin:left center;">ABR</span>
<span class="t" style="left:204.00px;top:561.20px;font-size:10px;line-height:12.0px;color:#444;transform:scaleX(0.9562);transform-origin:left center;">MAI</span>
<span class="t" style="left:240.50px;top:561.20px;font-size:10px;line-height:12.0px;color:#444;transform:scaleX(0.9515);transform-origin:left center;">JUN</span>
<span class="t" style="left:279.50px;top:561.20px;font-size:10px;line-height:12.0px;color:#444;transform:scaleX(0.8716);transform-origin:left center;">JUL</span>
<span class="t" style="left:314.50px;top:561.20px;font-size:10px;line-height:12.0px;color:#444;transform:scaleX(0.8998);transform-origin:left center;">AGO</span>
<span class="t" style="left:354.50px;top:561.20px;font-size:10px;line-height:12.0px;color:#444;transform:scaleX(0.8227);transform-origin:left center;">SET</span>
<span class="t" style="left:390.50px;top:561.20px;font-size:10px;line-height:12.0px;color:#444;transform:scaleX(0.9238);transform-origin:left center;">OUT</span>
<span class="t" style="left:430.00px;top:561.20px;font-size:10px;line-height:12.0px;color:#444;transform:scaleX(1.0152);transform-origin:left center;">NOV</span>
<span class="t" style="left:471.75px;top:561.20px;font-size:10px;line-height:12.0px;color:#444;transform:scaleX(0.8875);transform-origin:left center;">DEZ</span>
<span class="t" style="left:509.25px;top:561.20px;font-size:10px;line-height:12.0px;color:#444;transform:scaleX(0.9058);transform-origin:left center;">REL_ger</span>
<span class="t" style="left:564.50px;top:561.20px;font-size:10px;line-height:12.0px;color:#444;transform:scaleX(0.8610);transform-origin:left center;">REL_ser</span>
<span class="t" style="left:618.75px;top:561.20px;font-size:10px;line-height:12.0px;color:#444;transform:scaleX(0.8723);transform-origin:left center;">REL_ter</span>
<span class="t" style="left:731.20px;top:561.20px;font-size:10px;line-height:12.0px;color:#444;transform:scaleX(0.9257);transform-origin:left center;">DSH_rank</span>
<span class="t" style="left:794.40px;top:561.20px;font-size:10px;line-height:12.0px;color:#444;">INI</span>
<div class="r" style="left:661.25px;top:555.5px;width:59.5px;height:20px;background:#fff;box-sizing:border-box;border-left:1px solid #bbb;border-right:1px solid #bbb;"></div>
<div class="r" style="left:661.25px;top:574.8px;width:59.5px;height:1.8px;background:#217346;"></div>
<span class="t" style="left:670.75px;top:561.20px;font-size:10px;line-height:12.0px;color:#217346;font-weight:700;transform:scaleX(0.9589);transform-origin:left center;">DSH_ger</span>
<span class="t" style="left:62.00px;top:559.10px;font-size:11.5px;line-height:13.8px;color:#217346;font-weight:700;transform:scaleX(0.9389);transform-origin:left center;">...</span>
<span class="t" style="left:827.40px;top:559.10px;font-size:11.5px;line-height:13.8px;color:#217346;font-weight:700;transform:scaleX(0.9389);transform-origin:left center;">...</span>
<div class="r" style="left:887.3px;top:562.2px;width:11.3px;height:11.1px;background:#fff;box-sizing:border-box;border:1px solid #c8c8c8;"></div>
<div class="r" style="left:898.6px;top:562.2px;width:109.4px;height:11.1px;background:#fff;box-sizing:border-box;border:1px solid #bdbdbd;"></div>
<div class="r" style="left:1008px;top:562.2px;width:23.3px;height:11.1px;background:#d6d6d6;"></div>
<div class="r" style="left:1031.3px;top:562.2px;width:11.3px;height:11.1px;background:#fff;box-sizing:border-box;border:1px solid #c8c8c8;"></div>
<span class="t" style="left:5.50px;top:580.80px;font-size:10px;line-height:12.0px;color:#444;transform:scaleX(0.8994);transform-origin:left center;">Pronto</span>
<div class="r" style="left:843.5px;top:578.5px;width:28px;height:17.5px;background:#c6c6c6;"></div>
<div class="r" style="left:943px;top:586.3px;width:77px;height:1px;background:#a0a0a0;"></div>
<div class="r" style="left:976px;top:581.5px;width:3.5px;height:10.5px;background:#555;"></div>
<div class="r" style="left:981.5px;top:583px;width:1px;height:7px;background:#a0a0a0;"></div>
<span class="t" style="left:1037.50px;top:581.10px;font-size:9.5px;line-height:11.4px;color:#444;transform:scaleX(0.8415);transform-origin:left center;">90%</span>
<div class="r" style="left:0px;top:594.5px;width:37.5px;height:1.5px;background:#1a1a1a;"></div>
<div class="r" style="left:303.75px;top:594.5px;width:756.25px;height:1.5px;background:#1a1a1a;"></div>
<div class="r" style="left:37.5px;top:594.8px;width:266.25px;height:1.2px;background:#d4d4d4;"></div>
<div class="r" style="left:534px;top:594.5px;width:37.7px;height:1.5px;background:#8a8a8a;"></div>
<svg class="ov" width="1060" height="596" viewBox="0 0 1060 596"><path d="M24.500 563.500v6l-3.800-3z" fill="#217346"/><path d="M42.700 563.500v6l3.800-3z" fill="#217346"/><circle cx="852.500" cy="567.200" r="5.800" fill="none" stroke="#666" stroke-width="1.100"/><path d="M849.500 567.200h6M852.500 564.200v6" stroke="#666" stroke-width="1.100"/><path d="M875.200 563v1.300M875.200 566.500v1.300M875.200 570v1.300" stroke="#999" stroke-width="1.200"/><path d="M894.500 565.200v5l-3-2.500z" fill="#555"/><path d="M1035.500 565.200v5l3-2.500z" fill="#555"/><path d="M1049 169.200l2.700-2.800 2.700 2.800z" fill="#555"/><path d="M1049 549.300l2.700 2.800 2.700-2.800z" fill="#555"/><rect x="852.500" y="582.500" width="10" height="9" fill="none" stroke="#444" stroke-width="1"/><path d="M852.500 585.500h10M852.500 588.500h10M856 582.500v9M859.500 582.500v9" stroke="#444" stroke-width="1"/><rect x="881.500" y="582.500" width="10" height="9" fill="none" stroke="#666" stroke-width="1"/><rect x="884.500" y="584.500" width="4" height="5.500" fill="none" stroke="#666" stroke-width="1"/><rect x="911.500" y="582.500" width="10" height="9" fill="none" stroke="#666" stroke-width="1"/><path d="M914.500 582.500v5h4v-5" fill="none" stroke="#666" stroke-width="1"/><path d="M934.500 586.800h5" stroke="#444" stroke-width="1.300"/><path d="M1022.500 586.800h6M1025.500 583.800v6" stroke="#444" stroke-width="1.300"/><rect x="50" y="584.500" width="8" height="6.500" fill="none" stroke="#666" stroke-width="1"/><path d="M52.500 586v5M55 586v5M50 586.500h8" stroke="#666" stroke-width=".8"/><circle cx="50" cy="583.500" r="2" fill="#555"/></svg>
<svg class="ov" width="1060" height="596" viewBox="0 0 1060 596"><rect x="123.5" y="7.5" width="28" height="11" rx="5.5" fill="none" stroke="#5a9a79" stroke-width="1"/><circle cx="129.5" cy="13" r="2.6" fill="#5a9a79"/>
<path d="M164.5 7.5h9.5l1.5 1.5v9.5h-11z" fill="none" stroke="#fff" stroke-width="1.1"/><path d="M167 7.5v4h6v-4M167 18.5v-4h6v4" fill="none" stroke="#fff" stroke-width="1.1"/>
<path d="M189 10.5h5.5a3.7 3.7 0 0 1 0 7.4h-2" fill="none" stroke="#6aa886" stroke-width="1.2"/><path d="M192 7.5l-3.2 3 3.2 3" fill="none" stroke="#6aa886" stroke-width="1.2"/>
<path d="M202.2 12.1h3.6l-1.8 1.8z" fill="#6aa886"/>
<path d="M225 10.5h-5.5a3.7 3.7 0 0 0 0 7.4h2" fill="none" stroke="#6aa886" stroke-width="1.2"/><path d="M222 7.5l3.2 3-3.2 3" fill="none" stroke="#6aa886" stroke-width="1.2"/>
<path d="M229.2 12.1h3.6l-1.8 1.8z" fill="#6aa886"/>
<path d="M242.5 7.5h5.5l3 3v8h-8.5z" fill="none" stroke="#fff" stroke-width="1.1"/><path d="M247.5 11l2 5.5h-4zM247.500 16.500v2.500" fill="none" stroke="#fff" stroke-width="1"/>
<rect x="263.5" y="9" width="12" height="8.500" rx="1" fill="none" stroke="#4f9470" stroke-width="1.1"/><circle cx="269.500" cy="13.300" r="2.300" fill="none" stroke="#4f9470" stroke-width="1.1"/>
<path d="M288.500 10.500h5" stroke="#fff" stroke-width="1.1"/><path d="M288.7 12.85h4.6l-2.3 2.3z" fill="#fff"/>
<rect x="929.5" y="8.5" width="10.500" height="7.500" fill="none" stroke="#fff" stroke-width="1.1"/><path d="M929.500 10.500h10.500M934.750 10.500v5.500" stroke="#fff" stroke-width="1.1"/><path d="M931.300 13.300h2.200M936.200 13.300h2.200" stroke="#fff" stroke-width="1.2"/>
<path d="M967.500 13h8.500" stroke="#fff" stroke-width="1.1"/>
<rect x="1002.3" y="10.300" width="6.400" height="6.400" rx="1.1" fill="none" stroke="#fff" stroke-width="1.1"/><path d="M1004.200 10.300v-.8a1.300 1.300 0 0 1 1.300-1.300h4a1.300 1.300 0 0 1 1.300 1.300v4a1.300 1.300 0 0 1-1.300 1.300h-.8" fill="none" stroke="#fff" stroke-width="1.1"/>
<path d="M1038.500 8.500l7.500 7.500M1046 8.500l-7.500 7.500" stroke="#fff" stroke-width="1.1"/>
<circle cx="657.5" cy="35.8" r="3.6" fill="none" stroke="#555" stroke-width="1.1"/><path d="M655 38.500l-4.500 4.700" stroke="#555" stroke-width="1.2"/>
<path d="M970.500 36.500h-1v6h7.500v-3" fill="none" stroke="#217346" stroke-width="1.1"/><path d="M972 40c.5-3 2.500-4.500 5.500-4.500M975.500 33.300l2.300 2.200-2.300 2.200" fill="none" stroke="#217346" stroke-width="1.1"/>
<path d="M22 59.500h-2.800v17.500h9" fill="none" stroke="#f0a04b" stroke-width="1.300"/><path d="M31.500 59.500h2.800v4.500" fill="none" stroke="#f0a04b" stroke-width="1.300"/><path d="M22.300 61.300v-2.800h2.200a2.300 2.300 0 0 1 4.400 0h2.200v2.800z" fill="#f3f3f3" stroke="#777" stroke-width="1"/>
<rect x="29.300" y="65.500" width="10" height="13.500" fill="#fff" stroke="#555" stroke-width="1.100"/><path d="M32 69.500h5M32 72.300h5M32 75.100h5" stroke="#555" stroke-width="1"/>
<path d="M25 99.0h4l-2 2z" fill="#555"/>
<path d="M49.500 55.500l4.300 8.800M54.800 55.500l-4.300 8.800" stroke="#555" stroke-width="1.1"/><circle cx="49.500" cy="65" r="1.700" fill="none" stroke="#2b7cd3" stroke-width="1.1"/><circle cx="54.800" cy="65" r="1.700" fill="none" stroke="#2b7cd3" stroke-width="1.1"/>
<path d="M48.500 83.500h-3v-10h6v2" fill="none" stroke="#555" stroke-width="1"/><path d="M48.500 75.500h6l3 3v8h-9z" fill="#fff" stroke="#555" stroke-width="1"/><path d="M54 75.500v3.500h3.500" fill="none" stroke="#555" stroke-width="1"/>
<path d="M62.6 79.55h3.8l-1.9 1.9z" fill="#555"/>
<path d="M46.200 98.800l5.800-3.300 3.300 4-4.500 4.300z" fill="#f6a851" stroke="#ea8a2c" stroke-width=".9"/><path d="M52.300 95.300l1.800-1.500 3.300 3.800-1.800 1.700z" fill="#fff" stroke="#555" stroke-width="1"/><path d="M55.500 94.500l2-2.200 1.300 1.200-1.800 2.300" fill="#fff" stroke="#555" stroke-width="1"/>
<path d="M73.5 120.500v-4.500h4.500" fill="none" stroke="#8a8a8a" stroke-width="1"/><path d="M75.5 118l3 3M78.7 118.500v2.700h-2.700" fill="none" stroke="#8a8a8a" stroke-width="1"/>
<path d="M235 120.500v-4.500h4.500" fill="none" stroke="#8a8a8a" stroke-width="1"/><path d="M237 118l3 3M240.2 118.500v2.700h-2.700" fill="none" stroke="#8a8a8a" stroke-width="1"/>
<path d="M497.5 120.500v-4.500h4.500" fill="none" stroke="#8a8a8a" stroke-width="1"/><path d="M499.5 118l3 3M502.7 118.500v2.700h-2.700" fill="none" stroke="#8a8a8a" stroke-width="1"/>
<path d="M606.5 120.500v-4.500h4.500" fill="none" stroke="#8a8a8a" stroke-width="1"/><path d="M608.5 118l3 3M611.7 118.500v2.700h-2.700" fill="none" stroke="#8a8a8a" stroke-width="1"/>
<path d="M164.1 67.55h3.8l-1.9 1.9z" fill="#555"/>
<path d="M197.6 67.55h3.8l-1.9 1.9z" fill="#555"/>
<path d="M219.500 64l1.500-1.700 1.500 1.700" fill="none" stroke="#777" stroke-width=".9"/><path d="M234.500 62.500l1.500 1.700 1.500-1.700" fill="none" stroke="#777" stroke-width=".9"/>
<path d="M139.2 92.1h3.6l-1.8 1.8z" fill="#aaa"/>
<path d="M156.500 86.500h11M156.500 92h11M156.500 86.500v11M162 86.500v11M167.500 86.500v11" fill="none" stroke="#9a9a9a" stroke-width="1" stroke-dasharray="1.200 1.100"/><path d="M156 97.500h12" stroke="#8a8a8a" stroke-width="1.100"/>
<path d="M173.2 92.1h3.6l-1.8 1.8z" fill="#aaa"/>
<path d="M193 90.500l3.500-3.500 4 4-3.500 3.500z" fill="none" stroke="#777" stroke-width="1"/><path d="M194.500 86l2 2M201 92.500c.8 1 .8 2 0 2.300-.8-.3-.8-1.300 0-2.300" fill="none" stroke="#777" stroke-width="1"/><rect x="189.500" y="96" width="12" height="2.500" fill="#b5b5b5"/>
<path d="M206.2 92.1h3.6l-1.8 1.8z" fill="#aaa"/>
<rect x="216" y="96" width="12" height="2.500" fill="#b5b5b5"/>
<path d="M233.2 92.1h3.6l-1.8 1.8z" fill="#aaa"/>
<path d="M249.5 62.5H260.5" stroke="#8a8a8a" stroke-width="1"/><path d="M251.5 65.5H258.5" stroke="#8a8a8a" stroke-width="1"/><path d="M249.5 68.5H260.5" stroke="#8a8a8a" stroke-width="1"/>
<path d="M267 64.5H278" stroke="#8a8a8a" stroke-width="1"/><path d="M269 67.5H276" stroke="#8a8a8a" stroke-width="1"/><path d="M267 70.5H278" stroke="#8a8a8a" stroke-width="1"/>
<path d="M284 67.5H295" stroke="#8a8a8a" stroke-width="1"/><path d="M286 70.5H293" stroke="#8a8a8a" stroke-width="1"/><path d="M284 73.5H295" stroke="#8a8a8a" stroke-width="1"/>
<path d="M250 87.5H260.5" stroke="#8a8a8a" stroke-width="1"/><path d="M250 90.5H257" stroke="#8a8a8a" stroke-width="1"/><path d="M250 93.5H260.5" stroke="#8a8a8a" stroke-width="1"/><path d="M250 96.5H257" stroke="#8a8a8a" stroke-width="1"/>
<path d="M267 87.5H278" stroke="#8a8a8a" stroke-width="1"/><path d="M269 90.5H276" stroke="#8a8a8a" stroke-width="1"/><path d="M267 93.5H278" stroke="#8a8a8a" stroke-width="1"/><path d="M269 96.5H276" stroke="#8a8a8a" stroke-width="1"/>
<path d="M284 87.5H295" stroke="#8a8a8a" stroke-width="1"/><path d="M287.5 90.5H295" stroke="#8a8a8a" stroke-width="1"/><path d="M284 93.5H295" stroke="#8a8a8a" stroke-width="1"/><path d="M287.5 96.5H295" stroke="#8a8a8a" stroke-width="1"/>
<path d="M308 87.5H319" stroke="#8a8a8a" stroke-width="1"/><path d="M313.5 90.5H319" stroke="#8a8a8a" stroke-width="1"/><path d="M313.5 93.5H319" stroke="#8a8a8a" stroke-width="1"/><path d="M308 96.5H319" stroke="#8a8a8a" stroke-width="1"/>
<path d="M312 92h-4M309.500 90.300l-1.700 1.700 1.700 1.700" fill="none" stroke="#8a8a8a" stroke-width="1"/>
<path d="M325 87.5H336" stroke="#8a8a8a" stroke-width="1"/><path d="M330.5 90.5H336" stroke="#8a8a8a" stroke-width="1"/><path d="M330.5 93.5H336" stroke="#8a8a8a" stroke-width="1"/><path d="M325 96.5H336" stroke="#8a8a8a" stroke-width="1"/>
<path d="M325 92h4M327.500 90.300l1.700 1.700-1.700 1.700" fill="none" stroke="#8a8a8a" stroke-width="1"/>
<path d="M310 73.500l9.500-8.500M319.500 65h-3.500M319.500 65v3.500" fill="none" stroke="#8a8a8a" stroke-width="1"/>
<path d="M323.2 67.1h3.6l-1.8 1.8z" fill="#aaa"/>
<path d="M355 72.500h4.300a1.800 1.800 0 0 0 0-3.600M356.600 70.900l-1.600 1.600 1.600 1.600" fill="none" stroke="#8a8a8a" stroke-width="1"/>
<rect x="348.500" y="86.500" width="11.500" height="11.500" fill="none" stroke="#8a8a8a" stroke-width="1"/><path d="M348.500 89.500h11.500M348.500 95h11.500M354.250 86.500v3M354.250 95v3" stroke="#8a8a8a" stroke-width="1"/><path d="M350.500 92.250h7.500M352 90.800l-1.500 1.500 1.500 1.500M356.500 90.800l1.500 1.500-1.500 1.500" fill="none" stroke="#8a8a8a" stroke-width="1"/>
<path d="M455.2 92.1h3.6l-1.8 1.8z" fill="#aaa"/>
<path d="M603.2 67.6h3.6l-1.8 1.8z" fill="#aaa"/>
<rect x="512.500" y="87.500" width="12" height="8" fill="none" stroke="#8a8a8a" stroke-width="1"/><circle cx="518.500" cy="91.500" r="1.800" fill="none" stroke="#8a8a8a" stroke-width="1"/><path d="M520 93.500h5.500v4h-5.500z" fill="#f3f3f3" stroke="#8a8a8a" stroke-width="1"/>
<path d="M529.1 92.05h3.8l-1.9 1.9z" fill="#555"/>
<path d="M580 89.500h5M581.500 88l-1.500 1.500 1.500 1.500" fill="none" stroke="#8a8a8a" stroke-width="1"/><path d="M586 96.500h4M588.500 95l1.500 1.500-1.500 1.500" fill="none" stroke="#8a8a8a" stroke-width="1" opacity="0"/>
<path d="M597 96.500h5M600.500 95l1.500 1.500-1.500 1.500" fill="none" stroke="#8a8a8a" stroke-width="1"/>
<rect x="637.500" y="58.500" width="21" height="16.500" fill="#fafafa" stroke="#a8a8a8" stroke-width="1"/><path d="M637.500 62.500h21M637.500 66.500h21M637.500 70.500h21M643 58.500v16.500M653 58.500v16.500" stroke="#a8a8a8" stroke-width="1"/><path d="M643.500 59h9.500v3.500h-9.500zM643.500 63h5v3.500h-5zM643.500 67h9.500v3.500h-9.500z" fill="#cdcdcd"/>
<rect x="701.500" y="58.500" width="20.500" height="16" fill="#fafafa" stroke="#a8a8a8" stroke-width="1"/><path d="M701.500 62.500h20.500M701.500 66.500h20.500M701.500 70.500h20.500M707 58.500v16M712.500 58.500v16M717.500 58.500v16" stroke="#a8a8a8" stroke-width="1"/><path d="M708 66.500h9v7.500h-9z" fill="#cdcdcd"/><path d="M723.800 64.300l-7.500 8.500" stroke="#f3f3f3" stroke-width="4"/><path d="M723.800 64.300l-7.500 8.500" stroke="#9c9c9c" stroke-width="1.800" stroke-linecap="round"/><path d="M716.800 72c-2.300-.5-4 .8-4.500 2.700-.3 1.200-1.500 1.800-2.800 1.800 2.500 1.500 7.500 1 8.300-2.500z" fill="#a8a8a8"/>
<rect x="755.500" y="58.500" width="20.500" height="16" fill="#fafafa" stroke="#a8a8a8" stroke-width="1"/><path d="M755.500 62.500h20.500M755.500 70.500h20.500M761 58.500v16M771.500 58.500v16" stroke="#a8a8a8" stroke-width="1"/><path d="M761 63h10.500v7h-10.500z" fill="#cdcdcd"/><path d="M778.300 64.300l-7.500 8.500" stroke="#f3f3f3" stroke-width="4"/><path d="M778.300 64.300l-7.500 8.500" stroke="#9c9c9c" stroke-width="1.800" stroke-linecap="round"/><path d="M771.300 72c-2.300-.5-4 .8-4.500 2.700-.3 1.200-1.500 1.800-2.800 1.800 2.500 1.500 7.500 1 8.300-2.500z" fill="#a8a8a8"/>
<path d="M671.2 99.6h3.6l-1.8 1.8z" fill="#aaa"/>
<path d="M724.2 99.6h3.6l-1.8 1.8z" fill="#aaa"/>
<path d="M779.2 99.6h3.6l-1.8 1.8z" fill="#aaa"/>
<rect x="800" y="58.5" width="22" height="16.5" fill="#f9f9f9" stroke="#a6a6a6" stroke-width="1"/><path d="M800 64.00H822M800 69.50H822M807.33 58.5V75M814.67 58.5V75" stroke="#a6a6a6" stroke-width="1"/>
<path d="M823.500 64.300h-19.500v-1.600l-5 4 5 4v-1.600h19.500z" fill="#d2d2d2" stroke="#a6a6a6" stroke-width=".9"/>
<rect x="832.5" y="58.5" width="22.0" height="16.5" fill="#f9f9f9" stroke="#a6a6a6" stroke-width="1"/><path d="M832.5 64.00H854.5M832.5 69.50H854.5M839.83 58.5V75M847.17 58.5V75" stroke="#a6a6a6" stroke-width="1"/>
<path d="M835 64.300h9v-1.600l4.500 4-4.500 4v-1.600h-9z" fill="#d2d2d2" stroke="#a6a6a6" stroke-width=".9"/><path d="M847.500 62l8 9.500M855.500 62l-8 9.500" stroke="#b0b0b0" stroke-width="1.200"/>
<rect x="869.500" y="58.500" width="21" height="16.500" fill="#fff" stroke="#444" stroke-width="1.200"/><path d="M869.500 63.800h21M869.500 69.800h21M874.500 58.500v16.500M885.200 58.500v16.500" stroke="#9a9a9a" stroke-width="1"/><rect x="874.700" y="64" width="10.300" height="5.700" fill="#6cb2ee" stroke="#2b88d8" stroke-width="1"/><path d="M873.600 55.300h12.700M873.600 54v2.600M886.300 54v2.600" stroke="#2b88d8" stroke-width="1"/>
<path d="M808.6 99.55h3.8l-1.9 1.9z" fill="#555"/>
<path d="M841.6 99.55h3.8l-1.9 1.9z" fill="#555"/>
<path d="M878.6 99.55h3.8l-1.9 1.9z" fill="#555"/>
<path d="M927.1 60.05h3.8l-1.9 1.9z" fill="#555"/>
<path d="M926.1 77.55h3.8l-1.9 1.9z" fill="#555"/>
<path d="M926.1 96.05h3.8l-1.9 1.9z" fill="#555"/>
<rect x="910.500" y="73.500" width="12" height="10" fill="#fff" stroke="#555" stroke-width="1"/><path d="M910.500 75.500h12" stroke="#555" stroke-width="1.500"/><path d="M916.500 77v5M914.500 80l2 2 2-2" fill="none" stroke="#2b7cd3" stroke-width="1.100"/>
<path d="M911.500 97l5.500-5.500 5 4-5.500 5.500h-2z" fill="#fff" stroke="#555" stroke-width="1"/><path d="M914 94.500l4.500 4" stroke="#555" stroke-width="1"/>
<path d="M956.500 61.500h12l-4.500 5.500v6l-3 2v-8z" fill="#fff" stroke="#444" stroke-width="1.100"/>
<circle cx="1008.500" cy="63.500" r="7.800" fill="none" stroke="#555" stroke-width="1.200"/><path d="M1003 69.500l-9 9" stroke="#555" stroke-width="1.400"/>
<path d="M971.6 99.55h3.8l-1.9 1.9z" fill="#555"/>
<path d="M1025.6 99.55h3.8l-1.9 1.9z" fill="#555"/>
<path d="M1044.500 120l3.500-3.500 3.500 3.500" fill="none" stroke="#555" stroke-width="1.300"/>
<path d="M72.5 141.75h5.0l-2.5 2.5z" fill="#666"/>
<path d="M94.700 139.500v1.300M94.700 142.600v1.300M94.700 145.700v1.300" stroke="#8a8a8a" stroke-width="1.300"/>
<path d="M117.500 139l7 7M124.500 139l-7 7" stroke="#a6a6a6" stroke-width="1.100"/><path d="M145 143l2.500 3.500 5-7.500" fill="none" stroke="#a6a6a6" stroke-width="1.200"/>
<path d="M1047.300 140.800l2.500 2.700 2.500-2.700" fill="none" stroke="#444" stroke-width="1.500"/></svg>
<svg class="ov" width="1060" height="596" viewBox="0 0 1060 596" font-family="Liberation Sans, sans-serif"><rect x="248.500" y="266" width="592.500" height="119.500" fill="#fff" stroke="#d9d9d9" stroke-width="1"/>
<rect x="255.2" y="276.4" width="578.2" height="72.40000000000003" fill="#f2f2f2"/>
<rect x="261.94" y="291.84" width="17.35" height="56.96" fill="#4ead3b"/>
<rect x="279.29" y="329.86" width="17.35" height="18.94" fill="#f0462e"/>
<text transform="translate(270.62 284.57) scale(0.885 1)" font-size="8.45" text-anchor="middle" fill="#404040">785</text>
<text transform="translate(287.97 323.19) scale(0.885 1)" font-size="8.45" text-anchor="middle" fill="#404040">261</text>
<text transform="translate(279.29 362.03) scale(0.91 1)" font-size="8.45" text-anchor="middle" fill="#404040">Janeiro</text>
<rect x="310.12" y="294.02" width="17.35" height="54.78" fill="#4ead3b"/>
<rect x="327.48" y="337.26" width="17.35" height="11.54" fill="#f0462e"/>
<text transform="translate(318.80 286.75) scale(0.885 1)" font-size="8.45" text-anchor="middle" fill="#404040">755</text>
<text transform="translate(336.15 330.59) scale(0.885 1)" font-size="8.45" text-anchor="middle" fill="#404040">159</text>
<text transform="translate(327.48 362.03) scale(0.91 1)" font-size="8.45" text-anchor="middle" fill="#404040">Fevereiro</text>
<rect x="358.31" y="302.00" width="17.35" height="46.80" fill="#4ead3b"/>
<rect x="375.66" y="334.22" width="17.35" height="14.58" fill="#f0462e"/>
<text transform="translate(366.98 294.73) scale(0.885 1)" font-size="8.45" text-anchor="middle" fill="#404040">645</text>
<text transform="translate(384.33 327.55) scale(0.885 1)" font-size="8.45" text-anchor="middle" fill="#404040">201</text>
<text transform="translate(375.66 362.03) scale(0.91 1)" font-size="8.45" text-anchor="middle" fill="#404040">Março</text>
<rect x="406.49" y="311.07" width="17.35" height="37.73" fill="#4ead3b"/>
<rect x="423.84" y="340.67" width="17.35" height="8.13" fill="#f0462e"/>
<text transform="translate(415.17 303.80) scale(0.885 1)" font-size="8.45" text-anchor="middle" fill="#404040">520</text>
<text transform="translate(432.52 334.00) scale(0.885 1)" font-size="8.45" text-anchor="middle" fill="#404040">112</text>
<text transform="translate(423.84 362.03) scale(0.91 1)" font-size="8.45" text-anchor="middle" fill="#404040">Abril</text>
<rect x="454.68" y="302.00" width="17.35" height="46.80" fill="#4ead3b"/>
<rect x="472.03" y="338.86" width="17.35" height="9.94" fill="#f0462e"/>
<text transform="translate(463.35 294.73) scale(0.885 1)" font-size="8.45" text-anchor="middle" fill="#404040">645</text>
<text transform="translate(480.70 332.19) scale(0.885 1)" font-size="8.45" text-anchor="middle" fill="#404040">137</text>
<text transform="translate(472.02 362.03) scale(0.91 1)" font-size="8.45" text-anchor="middle" fill="#404040">Maio</text>
<rect x="502.86" y="311.07" width="17.35" height="37.73" fill="#4ead3b"/>
<rect x="520.21" y="340.67" width="17.35" height="8.13" fill="#f0462e"/>
<text transform="translate(511.53 303.80) scale(0.885 1)" font-size="8.45" text-anchor="middle" fill="#404040">520</text>
<text transform="translate(528.88 334.00) scale(0.885 1)" font-size="8.45" text-anchor="middle" fill="#404040">112</text>
<text transform="translate(520.21 362.03) scale(0.91 1)" font-size="8.45" text-anchor="middle" fill="#404040">Junho</text>
<rect x="551.04" y="305.26" width="17.35" height="43.54" fill="#4ead3b"/>
<rect x="568.39" y="336.46" width="17.35" height="12.34" fill="#f0462e"/>
<text transform="translate(559.72 297.99) scale(0.885 1)" font-size="8.45" text-anchor="middle" fill="#404040">600</text>
<text transform="translate(577.07 329.79) scale(0.885 1)" font-size="8.45" text-anchor="middle" fill="#404040">170</text>
<text transform="translate(568.39 362.03) scale(0.91 1)" font-size="8.45" text-anchor="middle" fill="#404040">Julho</text>
<rect x="599.23" y="295.47" width="17.35" height="53.33" fill="#4ead3b"/>
<rect x="616.58" y="337.55" width="17.35" height="11.25" fill="#f0462e"/>
<text transform="translate(607.90 288.20) scale(0.885 1)" font-size="8.45" text-anchor="middle" fill="#404040">735</text>
<text transform="translate(625.25 330.88) scale(0.885 1)" font-size="8.45" text-anchor="middle" fill="#404040">155</text>
<text transform="translate(616.58 362.03) scale(0.91 1)" font-size="8.45" text-anchor="middle" fill="#404040">Agosto</text>
<rect x="647.41" y="308.17" width="17.35" height="40.63" fill="#4ead3b"/>
<rect x="664.76" y="340.67" width="17.35" height="8.13" fill="#f0462e"/>
<text transform="translate(656.08 300.90) scale(0.885 1)" font-size="8.45" text-anchor="middle" fill="#404040">560</text>
<text transform="translate(673.43 334.00) scale(0.885 1)" font-size="8.45" text-anchor="middle" fill="#404040">112</text>
<text transform="translate(664.76 362.03) scale(0.91 1)" font-size="8.45" text-anchor="middle" fill="#404040">Setembro</text>
<rect x="695.59" y="291.11" width="17.35" height="57.69" fill="#4ead3b"/>
<rect x="712.94" y="337.26" width="17.35" height="11.54" fill="#f0462e"/>
<text transform="translate(704.27 283.84) scale(0.885 1)" font-size="8.45" text-anchor="middle" fill="#404040">795</text>
<text transform="translate(721.62 330.59) scale(0.885 1)" font-size="8.45" text-anchor="middle" fill="#404040">159</text>
<text transform="translate(712.94 362.03) scale(0.91 1)" font-size="8.45" text-anchor="middle" fill="#404040">Outubro</text>
<rect x="743.77" y="308.17" width="17.35" height="40.63" fill="#4ead3b"/>
<rect x="761.12" y="340.67" width="17.35" height="8.13" fill="#f0462e"/>
<text transform="translate(752.45 300.90) scale(0.885 1)" font-size="8.45" text-anchor="middle" fill="#404040">560</text>
<text transform="translate(769.80 334.00) scale(0.885 1)" font-size="8.45" text-anchor="middle" fill="#404040">112</text>
<text transform="translate(761.12 362.03) scale(0.91 1)" font-size="8.45" text-anchor="middle" fill="#404040">Novembro</text>
<rect x="791.96" y="288.94" width="17.35" height="59.86" fill="#4ead3b"/>
<rect x="809.31" y="336.83" width="17.35" height="11.97" fill="#f0462e"/>
<text transform="translate(800.63 281.67) scale(0.885 1)" font-size="8.45" text-anchor="middle" fill="#404040">825</text>
<text transform="translate(817.98 330.16) scale(0.885 1)" font-size="8.45" text-anchor="middle" fill="#404040">165</text>
<text transform="translate(809.31 362.03) scale(0.91 1)" font-size="8.45" text-anchor="middle" fill="#404040">Dezembro</text>
<path d="M255.2 348.8H833.4" stroke="#d0d0d0" stroke-width="1"/>
<rect x="476.300" y="374.700" width="4" height="4" fill="#4ead3b"/>
<text transform="translate(483.00 379.33) scale(0.91 1)" font-size="8.45" text-anchor="start" fill="#404040">Valor vendido</text>
<rect x="555.200" y="374.700" width="4" height="4" fill="#f0462e"/>
<text transform="translate(562.00 379.33) scale(0.91 1)" font-size="8.45" text-anchor="start" fill="#404040">Custo do serviço</text>
<rect x="248.500" y="423" width="592.500" height="122.500" fill="#fff" stroke="#d9d9d9" stroke-width="1"/>
<rect x="255.5" y="433.2" width="578.2" height="88.69999999999999" fill="#f2f2f2"/>
<rect x="265.44" y="455.76" width="28.3" height="66.14" fill="#6699cc"/>
<text transform="translate(279.59 449.19) scale(0.885 1)" font-size="8.45" text-anchor="middle" fill="#404040">R$ 524</text>
<text transform="translate(279.59 535.93) scale(0.91 1)" font-size="8.45" text-anchor="middle" fill="#404040">Janeiro</text>
<rect x="313.62" y="446.84" width="28.3" height="75.06" fill="#6699cc"/>
<text transform="translate(327.77 440.27) scale(0.885 1)" font-size="8.45" text-anchor="middle" fill="#404040">R$ 596</text>
<text transform="translate(327.77 535.93) scale(0.91 1)" font-size="8.45" text-anchor="middle" fill="#404040">Fevereiro</text>
<rect x="361.81" y="465.67" width="28.3" height="56.23" fill="#6699cc"/>
<text transform="translate(375.96 459.10) scale(0.885 1)" font-size="8.45" text-anchor="middle" fill="#404040">R$ 444</text>
<text transform="translate(375.96 535.93) scale(0.91 1)" font-size="8.45" text-anchor="middle" fill="#404040">Março</text>
<rect x="409.99" y="470.13" width="28.3" height="51.77" fill="#6699cc"/>
<text transform="translate(424.14 463.56) scale(0.885 1)" font-size="8.45" text-anchor="middle" fill="#404040">R$ 408</text>
<text transform="translate(424.14 535.93) scale(0.91 1)" font-size="8.45" text-anchor="middle" fill="#404040">Abril</text>
<rect x="458.18" y="457.74" width="28.3" height="64.16" fill="#6699cc"/>
<text transform="translate(472.32 451.17) scale(0.885 1)" font-size="8.45" text-anchor="middle" fill="#404040">R$ 508</text>
<text transform="translate(472.33 535.93) scale(0.91 1)" font-size="8.45" text-anchor="middle" fill="#404040">Maio</text>
<rect x="506.36" y="470.13" width="28.3" height="51.77" fill="#6699cc"/>
<text transform="translate(520.51 463.56) scale(0.885 1)" font-size="8.45" text-anchor="middle" fill="#404040">R$ 408</text>
<text transform="translate(520.51 535.93) scale(0.91 1)" font-size="8.45" text-anchor="middle" fill="#404040">Junho</text>
<rect x="554.54" y="467.40" width="28.3" height="54.50" fill="#6699cc"/>
<text transform="translate(568.69 460.83) scale(0.885 1)" font-size="8.45" text-anchor="middle" fill="#404040">R$ 430</text>
<text transform="translate(568.69 535.93) scale(0.91 1)" font-size="8.45" text-anchor="middle" fill="#404040">Julho</text>
<rect x="602.73" y="448.82" width="28.3" height="73.08" fill="#6699cc"/>
<text transform="translate(616.88 442.25) scale(0.885 1)" font-size="8.45" text-anchor="middle" fill="#404040">R$ 580</text>
<text transform="translate(616.88 535.93) scale(0.91 1)" font-size="8.45" text-anchor="middle" fill="#404040">Agosto</text>
<rect x="650.91" y="465.17" width="28.3" height="56.73" fill="#6699cc"/>
<text transform="translate(665.06 458.60) scale(0.885 1)" font-size="8.45" text-anchor="middle" fill="#404040">R$ 448</text>
<text transform="translate(665.06 535.93) scale(0.91 1)" font-size="8.45" text-anchor="middle" fill="#404040">Setembro</text>
<rect x="699.09" y="441.88" width="28.3" height="80.02" fill="#6699cc"/>
<text transform="translate(713.24 435.31) scale(0.885 1)" font-size="8.45" text-anchor="middle" fill="#404040">R$ 636</text>
<text transform="translate(713.24 535.93) scale(0.91 1)" font-size="8.45" text-anchor="middle" fill="#404040">Outubro</text>
<rect x="747.28" y="465.17" width="28.3" height="56.73" fill="#6699cc"/>
<text transform="translate(761.43 458.60) scale(0.885 1)" font-size="8.45" text-anchor="middle" fill="#404040">R$ 448</text>
<text transform="translate(761.43 535.93) scale(0.91 1)" font-size="8.45" text-anchor="middle" fill="#404040">Novembro</text>
<rect x="795.46" y="438.91" width="28.3" height="82.99" fill="#6699cc"/>
<text transform="translate(809.61 432.34) scale(0.885 1)" font-size="8.45" text-anchor="middle" fill="#404040">R$ 660</text>
<text transform="translate(809.61 535.93) scale(0.91 1)" font-size="8.45" text-anchor="middle" fill="#404040">Dezembro</text>
<path d="M255.5 521.9H833.7" stroke="#d0d0d0" stroke-width="1"/>
<rect x="854" y="266.500" width="156.800" height="279" fill="#fff" stroke="#d9d9d9" stroke-width="1"/>
<rect x="900.5" y="272.5" width="106.10000000000002" height="266.59999999999997" fill="#f2f2f2"/>
<rect x="900.5" y="277.02" width="70.1" height="13.2" fill="#ffc000"/>
<text transform="translate(892.50 285.95) scale(0.91 1)" font-size="8.45" text-anchor="end" fill="#404040">Dezembro</text>
<text transform="translate(976.60 286.45) scale(0.885 1)" font-size="8.45" text-anchor="start" fill="#404040">80%</text>
<rect x="900.5" y="299.26" width="70.1" height="13.2" fill="#ffc000"/>
<text transform="translate(892.50 308.19) scale(0.91 1)" font-size="8.45" text-anchor="end" fill="#404040">Novembro</text>
<text transform="translate(976.60 308.69) scale(0.885 1)" font-size="8.45" text-anchor="start" fill="#404040">80%</text>
<rect x="900.5" y="321.50" width="70.1" height="13.2" fill="#ffc000"/>
<text transform="translate(892.50 330.43) scale(0.91 1)" font-size="8.45" text-anchor="end" fill="#404040">Outubro</text>
<text transform="translate(976.60 330.93) scale(0.885 1)" font-size="8.45" text-anchor="start" fill="#404040">80%</text>
<rect x="900.5" y="343.75" width="70.1" height="13.2" fill="#ffc000"/>
<text transform="translate(892.50 352.68) scale(0.91 1)" font-size="8.45" text-anchor="end" fill="#404040">Setembro</text>
<text transform="translate(976.60 353.18) scale(0.885 1)" font-size="8.45" text-anchor="start" fill="#404040">80%</text>
<rect x="900.5" y="365.99" width="66" height="13.2" fill="#ffc000"/>
<text transform="translate(892.50 374.92) scale(0.91 1)" font-size="8.45" text-anchor="end" fill="#404040">Agosto</text>
<text transform="translate(972.50 375.42) scale(0.885 1)" font-size="8.45" text-anchor="start" fill="#404040">79%</text>
<rect x="900.5" y="388.23" width="40.6" height="13.2" fill="#ffc000"/>
<text transform="translate(892.50 397.16) scale(0.91 1)" font-size="8.45" text-anchor="end" fill="#404040">Julho</text>
<text transform="translate(947.10 397.66) scale(0.885 1)" font-size="8.45" text-anchor="start" fill="#404040">72%</text>
<rect x="900.5" y="410.47" width="64.8" height="13.2" fill="#ffc000"/>
<text transform="translate(892.50 419.40) scale(0.91 1)" font-size="8.45" text-anchor="end" fill="#404040">Junho</text>
<text transform="translate(971.30 419.90) scale(0.885 1)" font-size="8.45" text-anchor="start" fill="#404040">78%</text>
<rect x="900.5" y="432.71" width="66.4" height="13.2" fill="#ffc000"/>
<text transform="translate(892.50 441.64) scale(0.91 1)" font-size="8.45" text-anchor="end" fill="#404040">Maio</text>
<text transform="translate(972.90 442.14) scale(0.885 1)" font-size="8.45" text-anchor="start" fill="#404040">79%</text>
<rect x="900.5" y="454.95" width="64.8" height="13.2" fill="#ffc000"/>
<text transform="translate(892.50 463.88) scale(0.91 1)" font-size="8.45" text-anchor="end" fill="#404040">Abril</text>
<text transform="translate(971.30 464.38) scale(0.885 1)" font-size="8.45" text-anchor="start" fill="#404040">78%</text>
<rect x="900.5" y="477.20" width="30.6" height="13.2" fill="#ffc000"/>
<text transform="translate(892.50 486.13) scale(0.91 1)" font-size="8.45" text-anchor="end" fill="#404040">Março</text>
<text transform="translate(937.10 486.63) scale(0.885 1)" font-size="8.45" text-anchor="start" fill="#404040">69%</text>
<rect x="900.5" y="499.44" width="66.4" height="13.2" fill="#ffc000"/>
<text transform="translate(892.50 508.37) scale(0.91 1)" font-size="8.45" text-anchor="end" fill="#404040">Fevereiro</text>
<text transform="translate(972.90 508.87) scale(0.885 1)" font-size="8.45" text-anchor="start" fill="#404040">79%</text>
<rect x="900.5" y="521.68" width="23.7" height="13.2" fill="#ffc000"/>
<text transform="translate(892.50 530.61) scale(0.91 1)" font-size="8.45" text-anchor="end" fill="#404040">Janeiro</text>
<text transform="translate(930.20 531.11) scale(0.885 1)" font-size="8.45" text-anchor="start" fill="#404040">67%</text>
<path d="M900.5 272.5V539.4" stroke="#d9d9d9" stroke-width="1"/></svg>
</body></html>
